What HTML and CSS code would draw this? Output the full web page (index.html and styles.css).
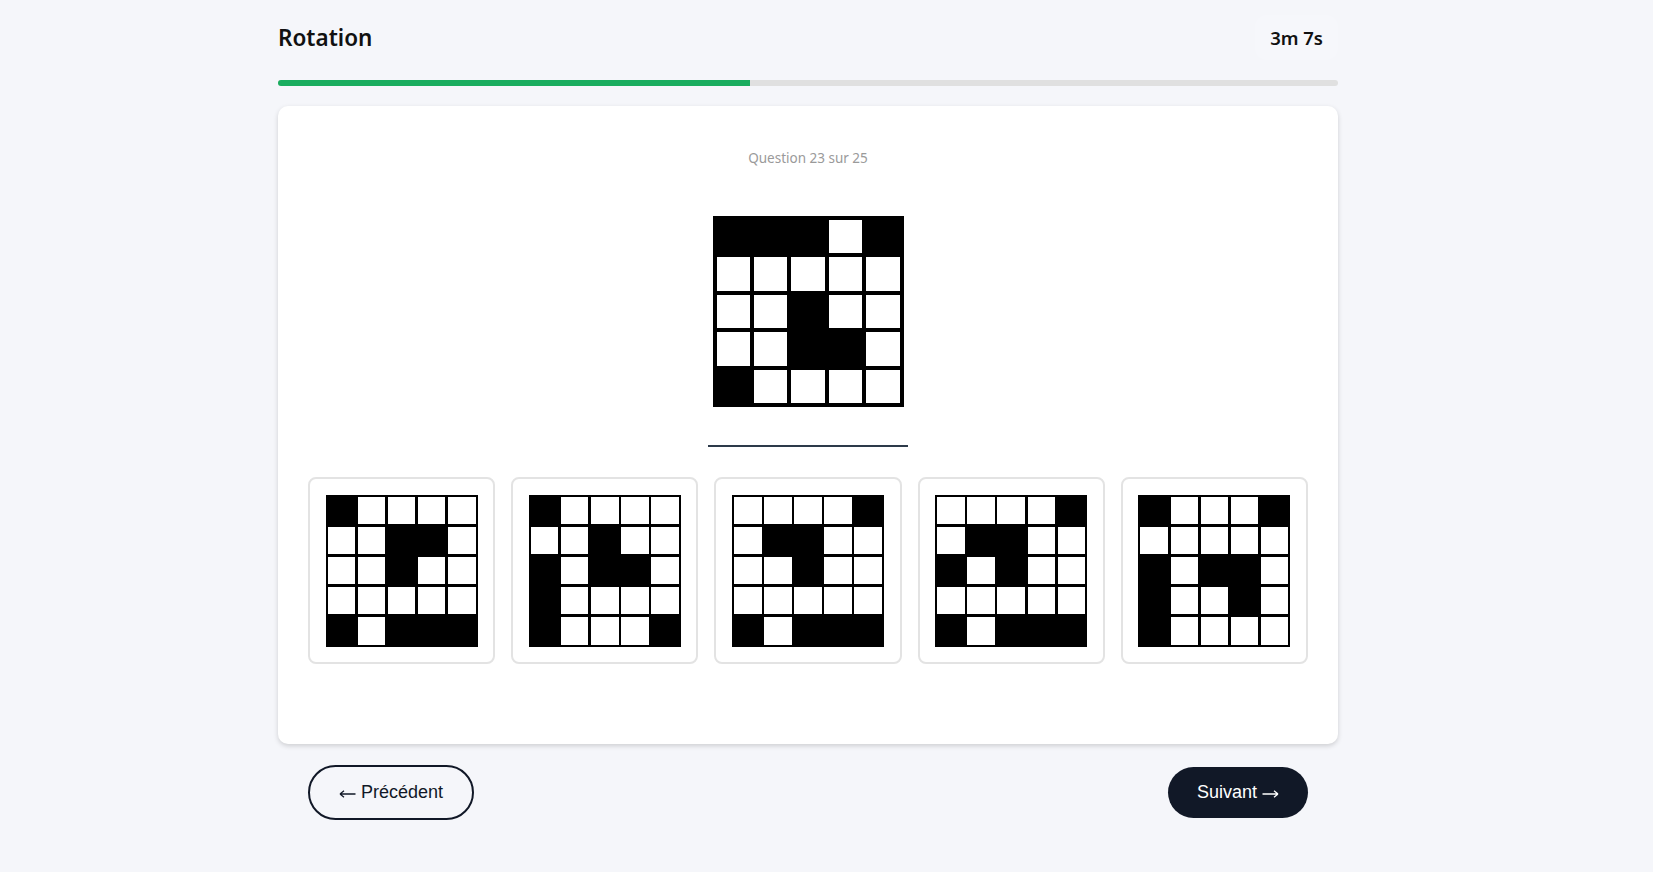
FILE: index.html
```html
<!DOCTYPE html>
<html lang="fr">
<head>
  <meta charset="UTF-8">
  <meta name="viewport" content="width=device-width, initial-scale=1.0">
  <title>Rotation - Test</title>
  <link rel="stylesheet" href="styles.css">
</head>
<body>
  <div class="page">
    <header class="top">
      <h1>Rotation</h1>
      <div class="timer">3m 7s</div>
    </header>

    <div class="progress">
      <div class="progress-fill"></div>
    </div>

    <div class="card">
      <div class="counter">Question 23 sur 25</div>

      <!-- Figure de référence -->
      <div class="grid big" id="model"></div>

      <div class="separator"></div>

      <div class="options" id="options"></div>
    </div>

    <div class="nav">
      <button class="btn btn-prev">
        <svg class="arrow" width="17" height="10" viewBox="0 0 17 10"><path d="M1 5H16.5M1 5L5 1.8M1 5L5 8.2" fill="none" stroke="currentColor" stroke-width="1.3"/></svg> Précédent
      </button>
      <button class="btn btn-next">
        Suivant <svg class="arrow" width="17" height="10" viewBox="0 0 17 10"><path d="M0.5 5H16M16 5L12 1.8M16 5L12 8.2" fill="none" stroke="currentColor" stroke-width="1.3"/></svg>
      </button>
    </div>
  </div>

  <script>
    // 1 = case noire, 0 = case blanche
    const model = [
      1,1,1,0,1,
      0,0,0,0,0,
      0,0,1,0,0,
      0,0,1,1,0,
      1,0,0,0,0
    ];

    const choices = [
      [1,0,0,0,0, 0,0,1,1,0, 0,0,1,0,0, 0,0,0,0,0, 1,0,1,1,1],
      [1,0,0,0,0, 0,0,1,0,0, 1,0,1,1,0, 1,0,0,0,0, 1,0,0,0,1],
      [0,0,0,0,1, 0,1,1,0,0, 0,0,1,0,0, 0,0,0,0,0, 1,0,1,1,1],
      [0,0,0,0,1, 0,1,1,0,0, 1,0,1,0,0, 0,0,0,0,0, 1,0,1,1,1],
      [1,0,0,0,1, 0,0,0,0,0, 1,0,1,1,0, 1,0,0,1,0, 1,0,0,0,0]
    ];

    function fillGrid(el, cells) {
      cells.forEach(c => {
        const cell = document.createElement('div');
        cell.className = c ? 'cell black' : 'cell';
        el.appendChild(cell);
      });
    }

    fillGrid(document.getElementById('model'), model);

    const options = document.getElementById('options');
    choices.forEach(cells => {
      const opt = document.createElement('div');
      opt.className = 'option';
      const grid = document.createElement('div');
      grid.className = 'grid small';
      fillGrid(grid, cells);
      opt.appendChild(grid);
      options.appendChild(opt);
    });
  </script>
</body>
</html>
```

FILE: styles.css
```css
body {
  font-family: "Noto Sans", "Open Sans", sans-serif;
  background-color: #f5f6fa;
  margin: 0;
  color: #111;
}
.page {
  max-width: 1616px;
}
.top, .progress, .card, .nav {
  width: 1060px;
  margin-left: auto;
  margin-right: auto;
}
.top {
  display: flex;
  justify-content: space-between;
  align-items: center;
  margin-top: 15px;
  height: 45px;
}
.top h1 {
  margin: 0;
  font-size: 22.5px;
  font-weight: 600;
  color: #111;
}
.timer {
  background-color: #f6f7fb;
  border-radius: 12px;
  padding: 0 15px;
  height: 45px;
  display: flex;
  align-items: center;
  font-size: 18.5px;
  font-weight: 600;
}
.progress {
  margin-top: 20px;
  height: 6px;
  background-color: #e0e0e0;
  border-radius: 3px;
  overflow: hidden;
}
.progress-fill {
  width: 44.5%;
  height: 100%;
  background-color: #1aad5f;
}
.card {
  margin-top: 20px;
  background: white;
  border-radius: 10px;
  box-shadow: 0 2px 5px rgba(0, 0, 0, 0.16);
  padding: 42px 30px 80px;
  box-sizing: border-box;
  display: flex;
  flex-direction: column;
  align-items: center;
}
.counter {
  font-size: 13.5px;
  line-height: 20px;
  color: #9a9a9a;
}
.grid {
  display: grid;
  grid-template-columns: repeat(5, 1fr);
  background-color: #000;
}
.grid.big {
  width: 191px;
  height: 191px;
  box-sizing: border-box;
  padding: 4px;
  gap: 4px;
  margin-top: 48px;
}
.grid.small {
  width: 152px;
  height: 152px;
  box-sizing: border-box;
  padding: 2px;
  gap: 2.5px;
}
.cell {
  background-color: #fff;
}
.cell.black {
  background-color: #000;
}
.separator {
  width: 200px;
  height: 2px;
  background-color: #2d3a4a;
  margin-top: 38px;
}
.options {
  margin-top: 30px;
  display: flex;
  gap: 16px;
  width: 100%;
}
.option {
  flex: 1;
  height: 187px;
  border: 2px solid #e3e3e3;
  border-radius: 8px;
  box-sizing: border-box;
  display: flex;
  align-items: center;
  justify-content: center;
  cursor: pointer;
}
.nav {
  margin-top: 21px;
  padding: 0 30px;
  box-sizing: border-box;
  display: flex;
  justify-content: space-between;
  align-items: center;
}
.btn {
  font-family: "Liberation Sans", Arial, sans-serif;
  font-size: 18px;
  border-radius: 30px;
  padding: 15px 29px;
  cursor: pointer;
  line-height: 21px;
}
.btn .arrow {
  vertical-align: -1px;
}
.btn-prev {
  background: transparent;
  border: 2px solid #111827;
  color: #111827;
}
.btn-next {
  background-color: #111827;
  border: none;
  color: white;
}
```
